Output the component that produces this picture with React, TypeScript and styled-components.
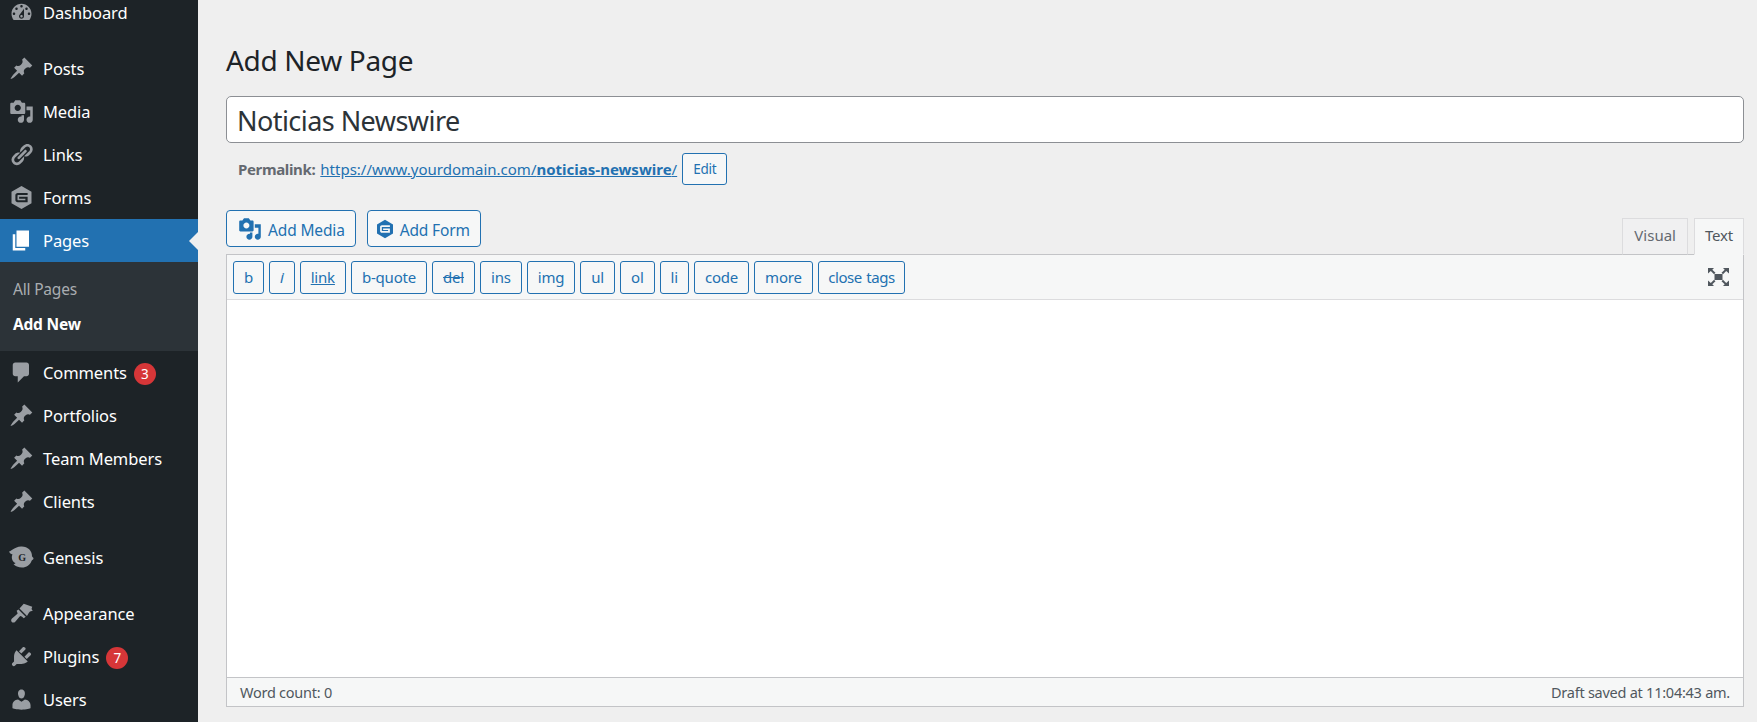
import React from "react";
import styled, { createGlobalStyle } from "styled-components";

const GlobalStyle = createGlobalStyle`
  html, body {
    margin: 0;
    padding: 0;
    height: 100%;
    overflow: hidden;
    background: #efefef;
    font-family: "Noto Sans", "Open Sans", sans-serif;
    color: #3c434a;
  }
`;

const pin =
  "M10.44 3.02l1.82-1.82 6.36 6.35-1.83 1.82c-1.05-.68-2.48-.57-3.41.36l-.75.75c-.92.93-1.04 2.35-.35 3.41l-1.83 1.82-2.41-2.41-2.8 2.79c-.42.42-3.38 2.71-3.8 2.29s1.86-3.39 2.28-3.81l2.79-2.79L4.1 9.36l1.83-1.82c1.05.69 2.48.57 3.4-.36l.75-.75c.93-.92 1.05-2.35.36-3.41z";
const media =
  "M13 11V4c0-.55-.45-1-1-1h-1.67L9 1H5L3.67 3H2c-.55 0-1 .45-1 1v7c0 .55.45 1 1 1h10c.55 0 1-.45 1-1zM7 4.5c1.38 0 2.5 1.12 2.5 2.5S8.38 9.5 7 9.5 4.5 8.38 4.5 7 5.62 4.5 7 4.5zM14 6h5v10.5c0 1.38-1.12 2.5-2.5 2.5S14 17.88 14 16.5s1.12-2.5 2.5-2.5c.17 0 .34.02.5.05V9h-3V6zm-4 8.05V13h2v3.5c0 1.38-1.12 2.5-2.5 2.5S7 17.88 7 16.5 8.12 14 9.5 14c.17 0 .34.02.5.05z";
const links =
  "M17.74 2.76c1.68 1.69 1.68 4.41 0 6.1l-1.53 1.52c-1.12 1.12-2.7 1.47-4.14 1.09l2.62-2.61.76-.77.76-.76c.84-.84.84-2.2 0-3.04-.84-.85-2.2-.85-3.04 0l-.77.76-3.38 3.38c-.37-1.44-.02-3.02 1.1-4.14l1.52-1.53c1.69-1.68 4.42-1.68 6.1 0zM8.59 13.43l5.34-5.34c.42-.42.42-1.1 0-1.52-.44-.43-1.13-.39-1.53 0l-5.33 5.34c-.42.42-.42 1.1 0 1.52.44.43 1.13.39 1.52 0zm-.76 2.29l4.14-4.15c.38 1.44.03 3.02-1.09 4.14l-1.52 1.53c-1.69 1.68-4.41 1.68-6.1 0-1.68-1.68-1.68-4.42 0-6.1l1.53-1.52c1.12-1.12 2.7-1.47 4.14-1.1l-4.14 4.15c-.85.84-.85 2.2 0 3.05.84.84 2.2.84 3.04 0z";
const page = "M6 15V2h10v13H6zm-1 1h8v2H3V5h2v11z";
const comment =
  "M5 2h9c1.1 0 2 .9 2 2v7c0 1.1-.9 2-2 2h-2l-5 5v-5H5c-1.1 0-2-.9-2-2V4c0-1.1.9-2 2-2z";
const dashboard =
  "M3.76 16h12.48c1.1-1.37 1.76-3.11 1.76-5 0-4.42-3.58-8-8-8s-8 3.58-8 8c0 1.89.66 3.63 1.76 5zM10 4c.55 0 1 .45 1 1s-.45 1-1 1-1-.45-1-1 .45-1 1-1zM6 6c.55 0 1 .45 1 1s-.45 1-1 1-1-.45-1-1 .45-1 1-1zm8 0c.55 0 1 .45 1 1s-.45 1-1 1-1-.45-1-1 .45-1 1-1zm-5.37 5.55L12 7v6c0 1.1-.9 2-2 2s-2-.9-2-2c0-.57.24-1.08.63-1.45zM4 10c.55 0 1 .45 1 1s-.45 1-1 1-1-.45-1-1 .45-1 1-1zm12 0c.55 0 1 .45 1 1s-.45 1-1 1-1-.45-1-1 .45-1 1-1zm-5 3c0-.55-.45-1-1-1s-1 .45-1 1 .45 1 1 1 1-.45 1-1z";
const brush =
  "M18.6 4.6L11.8 2.2 10 4.2l-1.6 1.7 6 6 1.4-2.4 1-1.2 2.2-.6-1-1.4zM7.6 6.8l5.8 5.8-1.6 1.2-1.6-1.4-1.2-.4-.8.8-3.2 3.7c-.8.9-2.1.9-2.8.2s-.6-1.9.2-2.7l3.7-3.3.8-.8-.4-1.2-.4-.9z";
const plugin =
  "M13.11 4.36L9.87 7.6 8 5.73l3.24-3.24c.35-.34 1.05-.2 1.56.32.52.51.66 1.21.31 1.55zm-8 1.77l.91-1.12 9.01 9.01-1.19.84c-.71.71-2.63 1.16-3.82 1.16H6.14L4.9 17.26c-.59.59-1.54.59-2.12 0-.59-.58-.59-1.53 0-2.12l1.24-1.24v-3.88c0-1.13.4-3.19 1.09-3.89zm7.26 3.97l3.24-3.24c.34-.35 1.04-.21 1.55.31.52.51.66 1.21.31 1.55l-3.24 3.25z";
const users =
  "M10 9.25c-2.27 0-2.73-3.44-2.73-3.44C7 4.02 7.82 2 9.97 2c2.16 0 2.98 2.02 2.71 3.81 0 0-.41 3.44-2.68 3.44zm0 2.57L12.72 10c2.39 0 4.52 2.33 4.52 4.53v2.49s-3.65 1.13-7.24 1.13c-3.65 0-7.24-1.13-7.24-1.13v-2.49c0-2.25 1.94-4.48 4.47-4.48z";

const Layout = styled.div`
  display: flex;
  height: 722px;
  overflow: hidden;
`;

const Sidebar = styled.nav`
  width: 198px;
  flex: none;
  background: #1d2327;
  overflow: hidden;
`;

const MenuList = styled.div`
  margin-top: -9px;
`;

const MenuRow = styled.div<{ $active?: boolean; $gap?: boolean }>`
  position: relative;
  display: flex;
  align-items: center;
  height: 43px;
  margin-top: ${(p) => (p.$gap ? "13px" : "0")};
  background: ${(p) => (p.$active ? "#2271b1" : "transparent")};
  font-size: 16.5px;
  letter-spacing: -0.1px;
  color: #fff;
`;

const IconSlot = styled.span<{ $active?: boolean }>`
  width: 43px;
  flex: none;
  display: flex;
  justify-content: center;
  color: ${(p) => (p.$active ? "#fff" : "#9a9ea3")};
  svg {
    display: block;
  }
`;

const Pointer = styled.span`
  position: absolute;
  right: 0;
  top: 13px;
  border: 9px solid transparent;
  border-right-color: #efefef;
  border-left-width: 0;
`;

const Badge = styled.span`
  display: inline-flex;
  align-items: center;
  justify-content: center;
  width: 22px;
  height: 22px;
  border-radius: 50%;
  background: #d63638;
  color: #fff;
  font-size: 13.5px;
  margin-left: 7px;
  margin-top: 2px;
  letter-spacing: 0;
`;

const SubMenu = styled.div`
  height: 89px;
  background: #2c3338;
  padding-top: 10px;
  box-sizing: border-box;
`;

const SubItem = styled.div<{ $current?: boolean }>`
  height: 35px;
  line-height: 35px;
  padding-left: 13px;
  font-size: 15.5px;
  letter-spacing: -0.2px;
  font-weight: ${(p) => (p.$current ? 700 : 400)};
  color: ${(p) => (p.$current ? "#fff" : "#a9adb1")};
`;

const Main = styled.main`
  flex: 1;
  min-width: 0;
  padding: 42px 13px 0 28px;
`;

const Heading = styled.h1`
  margin: 0;
  height: 36px;
  line-height: 36px;
  font-size: 28px;
  font-weight: 400;
  letter-spacing: -0.33px;
  color: #1d2327;
`;

const TitleInput = styled.input`
  display: block;
  box-sizing: border-box;
  width: 100%;
  height: 47px;
  margin-top: 18px;
  padding: 2px 10px 0;
  border: 1px solid #8c8f94;
  border-radius: 5px;
  background: #fff;
  font-family: inherit;
  font-size: 27px;
  letter-spacing: -0.55px;
  color: #2c3338;
  outline: none;
`;

const PermalinkRow = styled.div`
  display: flex;
  align-items: center;
  height: 32px;
  margin-top: 10px;
  padding-left: 12px;
  font-size: 15px;
  color: #646970;
`;

const PermalinkLabel = styled.strong`
  margin-right: 5px;
  letter-spacing: -0.35px;
`;

const PermalinkUrl = styled.a`
  color: #2271b1;
  text-decoration: underline;
  margin-right: 5px;
`;

const SmallButton = styled.button`
  height: 32px;
  box-sizing: border-box;
  padding: 0 10px;
  border: 1px solid #2271b1;
  border-radius: 3px;
  background: #f6f7f7;
  color: #2271b1;
  font-family: inherit;
  font-size: 13.5px;
  letter-spacing: -0.25px;
`;

const EditorTop = styled.div`
  display: flex;
  justify-content: space-between;
  align-items: flex-end;
  height: 44px;
  margin-top: 25px;
`;

const MediaButtons = styled.div`
  display: flex;
  gap: 11px;
  align-self: flex-start;
`;

const MediaButton = styled.button<{ $form?: boolean }>`
  display: flex;
  align-items: center;
  gap: ${(p) => (p.$form ? "5px" : "6px")};
  height: 37px;
  box-sizing: border-box;
  padding: 2px 10px 0 ${(p) => (p.$form ? "7px" : "11px")};
  border: 1px solid #2271b1;
  border-radius: 4px;
  background: #f6f7f7;
  color: #2271b1;
  font-family: inherit;
  font-size: 15.5px;
  letter-spacing: -0.15px;
  svg {
    display: block;
    flex: none;
    margin-top: -2px;
  }
`;

const Tabs = styled.div`
  display: flex;
  gap: 6px;
`;

const Tab = styled.div<{ $active?: boolean }>`
  position: relative;
  height: 37px;
  line-height: 32px;
  box-sizing: border-box;
  padding: 0 ${(p) => (p.$active ? "10px" : "11px")};
  margin-bottom: -1px;
  border: 1px solid #dcdcde;
  border-bottom-color: ${(p) => (p.$active ? "#f6f7f7" : "#c3c4c7")};
  background: ${(p) => (p.$active ? "#f6f7f7" : "#f0f0f1")};
  color: ${(p) => (p.$active ? "#50575e" : "#646970")};
  font-size: 15px;
  letter-spacing: ${(p) => (p.$active ? "-0.2px" : "0")};
`;

const Editor = styled.div`
  border: 1px solid #c3c4c7;
  box-sizing: border-box;
  height: 453px;
  display: flex;
  flex-direction: column;
`;

const Toolbar = styled.div`
  display: flex;
  align-items: center;
  gap: 5px;
  height: 45px;
  flex: none;
  box-sizing: border-box;
  padding: 0 6px;
  background: #f6f7f7;
  border-bottom: 1px solid #dcdcde;
`;

const TagButton = styled.button<{ $strike?: boolean; $link?: boolean; $italic?: boolean; $tight?: boolean }>`
  height: 33px;
  box-sizing: border-box;
  padding: 0 ${(p) => (p.$tight ? "9.5px" : "10px")};
  border: 1px solid #2271b1;
  border-radius: 3px;
  background: #f6f7f7;
  color: #2271b1;
  font-family: inherit;
  font-size: 15px;
  letter-spacing: ${(p) => (p.$tight ? "-0.45px" : "-0.2px")};
  word-spacing: ${(p) => (p.$tight ? "1px" : "0")};
  font-style: ${(p) => (p.$italic ? "italic" : "normal")};
  text-decoration: ${(p) =>
    p.$strike ? "line-through" : p.$link ? "underline" : "none"};
`;

const FullscreenButton = styled.span`
  margin-left: auto;
  margin-right: 8px;
  color: #50575e;
  svg {
    display: block;
  }
`;

const EditorBody = styled.div`
  flex: 1;
  background: #fff;
`;

const StatusBar = styled.div`
  display: flex;
  justify-content: space-between;
  align-items: center;
  flex: none;
  height: 29px;
  box-sizing: border-box;
  padding: 0 13px;
  background: #f6f7f7;
  border-top: 1px solid #c3c4c7;
  font-size: 14.5px;
  letter-spacing: -0.25px;
  color: #50575e;
`;

function Dashicon({ d, size = 25 }: { d: string; size?: number }) {
  return (
    <svg width={size} height={size} viewBox="0 0 20 20" fill="currentColor">
      <path d={d} fillRule="evenodd" />
    </svg>
  );
}

function GravityIcon({ size = 25 }: { size?: number }) {
  return (
    <svg width={size} height={size} viewBox="0 0 20 20" fill="currentColor">
      <path
        fillRule="evenodd"
        d="M10 .8l8 4.6v9.2l-8 4.6-8-4.6V5.4zM6.900 6.300c-1 0-1.800.8-1.800 1.800v3.800c0 1 .8 1.800 1.800 1.800h8v-4.300H8.100v1.600h5v1.100H7.200c-.2 0-.4-.2-.4-.4V8.300c0-.2.2-.4.4-.4h7.700V6.300z"
      />
    </svg>
  );
}

function GenesisIcon() {
  return (
    <svg width="27" height="25" viewBox="0 0 27 25" fill="currentColor">
      <path d="M1 6.500C4 6 6 2 13 1.500c6.500-.4 11 4 11 9.500 0 1 1.500 1.500 1.500 2.500 0 1.500-1.500 1.300-2 2.500-1.500 4-5 6.500-9.500 6.500-3.500 0-7-1.500-8.500-3.500 1.500 0 2-.7 2-1C4 17 3 12 4.500 9.500 3 9 1.500 8 1 6.500z" />
      <text
        x="14"
        y="15.500"
        textAnchor="middle"
        fontFamily="Liberation Serif, serif"
        fontWeight="700"
        fontSize="10"
        fill="#1d2327"
      >
        G
      </text>
    </svg>
  );
}

const tags: { label: string; strike?: boolean; link?: boolean; italic?: boolean; tight?: boolean }[] = [
  { label: "b" },
  { label: "i", italic: true },
  { label: "link", link: true },
  { label: "b-quote" },
  { label: "del", strike: true },
  { label: "ins" },
  { label: "img" },
  { label: "ul" },
  { label: "ol" },
  { label: "li" },
  { label: "code" },
  { label: "more" },
  { label: "close tags", tight: true },
];

export default function App() {
  return (
    <>
      <GlobalStyle />
      <Layout>
        <Sidebar>
          <MenuList>
            <MenuRow>
              <IconSlot><Dashicon d={dashboard} /></IconSlot>
              Dashboard
            </MenuRow>
            <MenuRow $gap>
              <IconSlot><Dashicon d={pin} /></IconSlot>
              Posts
            </MenuRow>
            <MenuRow>
              <IconSlot><Dashicon d={media} /></IconSlot>
              Media
            </MenuRow>
            <MenuRow>
              <IconSlot><Dashicon d={links} /></IconSlot>
              Links
            </MenuRow>
            <MenuRow>
              <IconSlot><GravityIcon /></IconSlot>
              Forms
            </MenuRow>
            <MenuRow $active>
              <IconSlot $active><Dashicon d={page} /></IconSlot>
              Pages
              <Pointer />
            </MenuRow>
            <SubMenu>
              <SubItem>All Pages</SubItem>
              <SubItem $current>Add New</SubItem>
            </SubMenu>
            <MenuRow>
              <IconSlot><Dashicon d={comment} /></IconSlot>
              Comments
              <Badge>3</Badge>
            </MenuRow>
            <MenuRow>
              <IconSlot><Dashicon d={pin} /></IconSlot>
              Portfolios
            </MenuRow>
            <MenuRow>
              <IconSlot><Dashicon d={pin} /></IconSlot>
              Team Members
            </MenuRow>
            <MenuRow>
              <IconSlot><Dashicon d={pin} /></IconSlot>
              Clients
            </MenuRow>
            <MenuRow $gap>
              <IconSlot><GenesisIcon /></IconSlot>
              Genesis
            </MenuRow>
            <MenuRow $gap>
              <IconSlot><Dashicon d={brush} /></IconSlot>
              Appearance
            </MenuRow>
            <MenuRow>
              <IconSlot><Dashicon d={plugin} /></IconSlot>
              Plugins
              <Badge>7</Badge>
            </MenuRow>
            <MenuRow>
              <IconSlot><Dashicon d={users} /></IconSlot>
              Users
            </MenuRow>
          </MenuList>
        </Sidebar>
        <Main>
          <Heading>Add New Page</Heading>
          <TitleInput readOnly value="Noticias Newswire" />
          <PermalinkRow>
            <PermalinkLabel>Permalink:</PermalinkLabel>
            <PermalinkUrl href="#">
              https://www.yourdomain.com/<strong>noticias-newswire</strong>/
            </PermalinkUrl>
            <SmallButton>Edit</SmallButton>
          </PermalinkRow>
          <EditorTop>
            <MediaButtons>
              <MediaButton>
                <Dashicon d={media} size={24} />
                Add Media
              </MediaButton>
              <MediaButton $form>
                <GravityIcon size={20} />
                Add Form
              </MediaButton>
            </MediaButtons>
            <Tabs>
              <Tab>Visual</Tab>
              <Tab $active>Text</Tab>
            </Tabs>
          </EditorTop>
          <Editor>
            <Toolbar>
              {tags.map((t) => (
                <TagButton
                  key={t.label}
                  $strike={t.strike}
                  $link={t.link}
                  $italic={t.italic}
                  $tight={t.tight}
                >
                  {t.label}
                </TagButton>
              ))}
              <FullscreenButton>
                <svg width="21" height="18" viewBox="0 0 21 18" fill="currentColor">
                  <rect x="6.500" y="6" width="8" height="6" />
                  <path d="M0 0h6L4.300 1.700 7.500 4.800 6 6.200 2.800 3.100 0 5.500zM21 0h-6l1.700 1.700-3.200 3.100L15 6.200l3.200-3.100L21 5.500zM0 18h6l-1.700-1.700 3.200-3.100L6 11.800l-3.200 3.100L0 12.500zM21 18h-6l1.700-1.700-3.200-3.100 1.500-1.400 3.200 3.100 2.800-2.400z" />
                </svg>
              </FullscreenButton>
            </Toolbar>
            <EditorBody />
            <StatusBar>
              <span>Word count: 0</span>
              <span>Draft saved at 11:04:43 am.</span>
            </StatusBar>
          </Editor>
        </Main>
      </Layout>
    </>
  );
}
